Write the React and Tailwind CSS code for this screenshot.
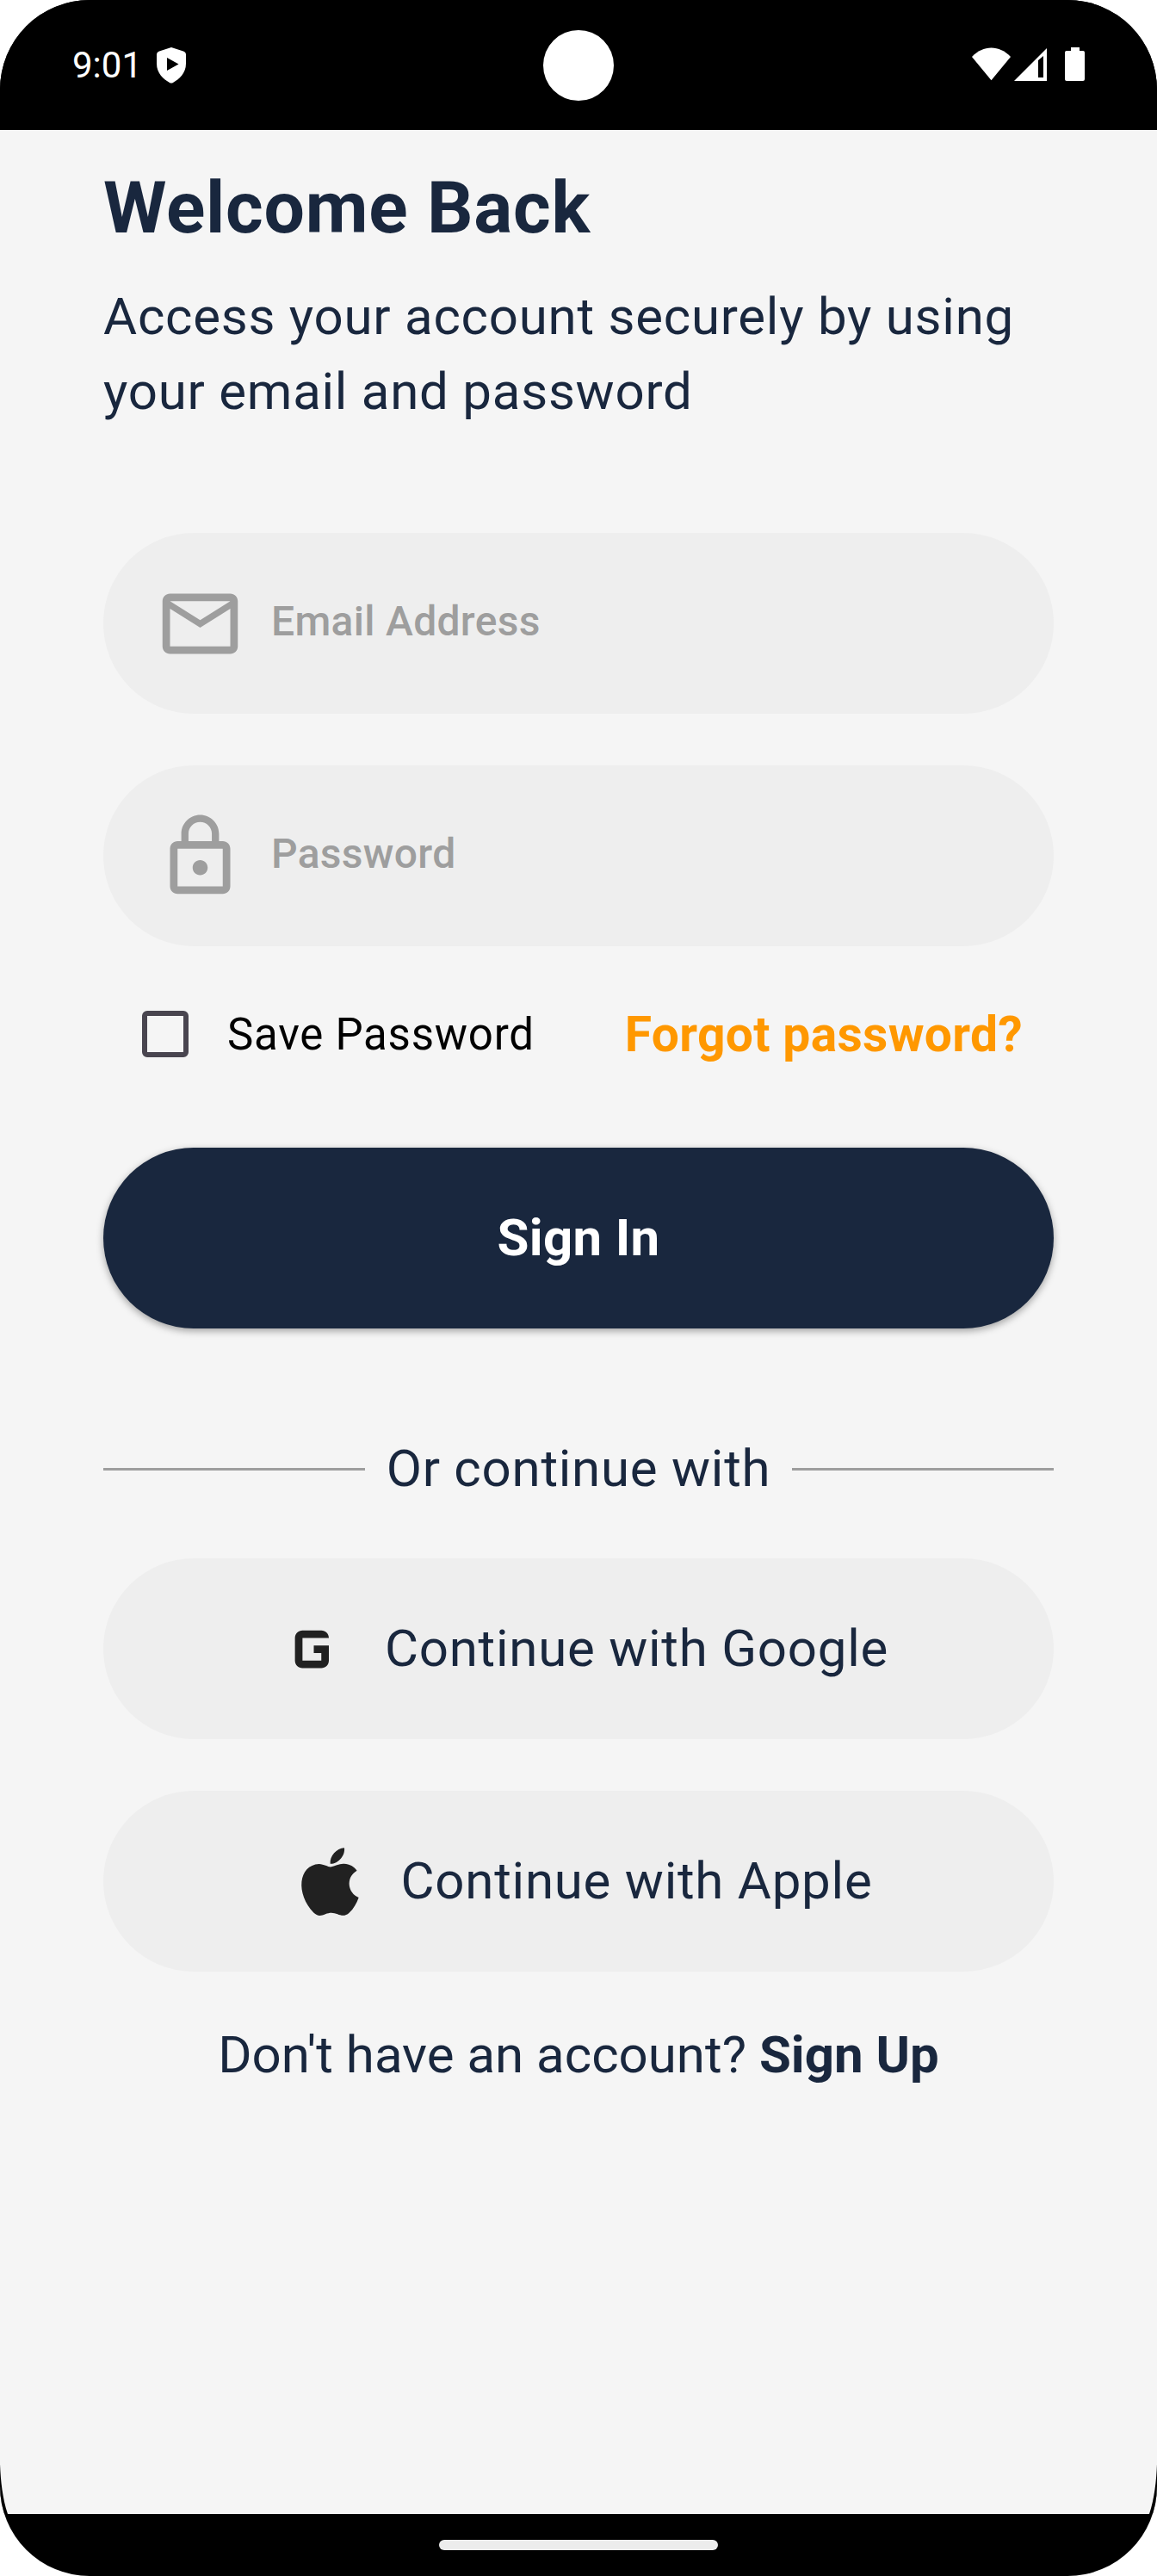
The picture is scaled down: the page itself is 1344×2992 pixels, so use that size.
function StatusIcons() {
  return (
    <svg className="block h-12 w-[136px]" viewBox="1124 52 136 48" fill="#fff">
      <path d="M1129 66C1142 52 1161 52 1174 66L1151.500 93.200Z" />
      <path fillRule="evenodd" d="M1178 94L1216 56V94ZM1206 70V90H1212V65Z" />
      <path d="M1244 55h10v4h4a2 2 0 0 1 2 2v31a2 2 0 0 1-2 2h-19a2 2 0 0 1-2-2V61a2 2 0 0 1 2-2h5Z" />
    </svg>
  );
}

function StatusBar() {
  return (
    <header className="relative flex h-[151px] items-start justify-between bg-black pr-[84px] pl-[84px] text-white">
      <div className="flex items-start">
        <span className="mt-[51px] w-[98px] text-[42px] leading-[49px]">9:01</span>
        <svg className="mt-[54px] h-[43px] w-[34px]" viewBox="0 0 34 43">
          <path fill="#fff" fillRule="evenodd" d="M17 1L31 5.500Q34 6.500 34 9.500V20C34 31 26 38 19 42Q17 43 15 42C8 38 0 31 0 20V9.500Q0 6.500 3 5.500ZM12 13V28L25.500 20.500Z" />
        </svg>
      </div>
      <div className="mt-[52px]"><StatusIcons /></div>
      <div className="absolute top-[35px] left-[631px] size-[82px] rounded-full bg-white" />
    </header>
  );
}

function Field({ label, children }) {
  return (
    <div className="flex h-[210px] items-center gap-[30px] rounded-full bg-[#eeeeee] pl-[60px] text-[#9e9e9e]">
      <svg className="size-[105px]" viewBox="0 0 24 24" fill="currentColor">{children}</svg>
      <span className="pb-[4px] text-[48px] leading-[56px] font-medium tracking-[0.3px]">{label}</span>
    </div>
  );
}

function SocialButton({ label, path }) {
  return (
    <button className="flex h-[210px] w-full items-center justify-center gap-[30px] rounded-full bg-[#eeeeee]">
      <svg className="size-[105px]" viewBox="0 0 24 24" fill="#212121"><path d={path} /></svg>
      <span className="text-[60px] leading-[86px] tracking-[0.75px]">{label}</span>
    </button>
  );
}

const googlePath = "M16 9c0-1.100-.9-2-2-2H9c-1.100 0-2 .9-2 2v6c0 1.100.9 2 2 2h5c1.100 0 2-.9 2-2v-4h-4v2h2v2H9V9h7z";
const applePath = "M17.050 20.280c-.98.950-2.050.8-3.080.350-1.090-.460-2.090-.480-3.240 0-1.440.620-2.200.440-3.060-.350C2.790 15.250 3.510 7.590 9.050 7.310c1.350.070 2.290.740 3.080.8 1.180-.240 2.310-.930 3.570-.840 1.510.120 2.650.720 3.400 1.800-3.120 1.870-2.380 5.980.480 7.130-.570 1.500-1.310 2.990-2.540 4.090l.010-.010zM12.030 7.250c-.150-2.230 1.660-4.070 3.740-4.250.290 2.580-2.340 4.500-3.740 4.250z";

export default function App() {
  return (
    <div className="h-[2992px] w-[1344px] bg-white font-['Roboto',sans-serif] text-[#19273e]">
      <div className="flex h-full flex-col overflow-hidden rounded-[104px] bg-black">
        <StatusBar />
        <main className="relative h-[2769px] bg-[#f5f5f5] px-[120px]">
          <h1 className="pt-[31px] text-[84px] leading-[120px] font-bold tracking-[0.75px]">Welcome Back</h1>
          <p className="mt-[22px] text-[60px] leading-[87px] tracking-[0.75px] whitespace-nowrap">
            Access your account securely by using<br />your email and password
          </p>
          <div className="mt-[121px] flex flex-col gap-[60px]">
            <Field label="Email Address">
              <path d="M22 6c0-1.100-.9-2-2-2H4c-1.100 0-2 .9-2 2v12c0 1.100.9 2 2 2h16c1.100 0 2-.9 2-2V6zm-2 0l-8 5-8-5h16zm0 12H4V8l8 5 8-5v10z" />
            </Field>
            <Field label="Password">
              <path d="M12 17c1.100 0 2-.9 2-2s-.9-2-2-2-2 .9-2 2 .9 2 2 2zm6-9h-1V6c0-2.760-2.240-5-5-5S7 3.240 7 6v2H6c-1.100 0-2 .9-2 2v10c0 1.100.9 2 2 2h12c1.100 0 2-.9 2-2V10c0-1.100-.9-2-2-2zM8.900 6c0-1.710 1.390-3.100 3.100-3.100s3.100 1.390 3.100 3.100v2H8.900V6zM18 20H6V10h12v10z" />
            </Field>
          </div>
          <div className="flex h-[234px] items-center justify-between pr-[36px] pb-[30px] pl-[45px]">
            <label className="flex items-center gap-[45px]">
              <span className="size-[54px] rounded-[6px] border-[6px] border-[#49454f]" />
              <span className="pt-[2px] text-[51px] leading-[74px] tracking-[0.75px] text-black">Save Password</span>
            </label>
            <a className="pt-[2px] text-[57px] leading-[82px] font-bold tracking-[0.3px] text-[#ff9800]">Forgot password?</a>
          </div>
          <button className="block h-[210px] w-full rounded-full bg-[#19273e] text-[60px] font-bold tracking-[0.3px] text-white shadow-[0_3px_9px_rgba(0,0,0,0.35)]">Sign In</button>
          <div className="mt-[120px] flex h-[87px] items-center gap-[25px]">
            <div className="h-[3px] flex-1 bg-[#9e9e9e]" />
            <span className="pb-[2px] text-[60px] leading-[85px] tracking-[0.75px]">Or continue with</span>
            <div className="h-[3px] flex-1 bg-[#9e9e9e]" />
          </div>
          <div className="mt-[60px] flex flex-col gap-[60px]">
            <SocialButton label="Continue with Google" path={googlePath} />
            <SocialButton label="Continue with Apple" path={applePath} />
          </div>
          <p className="mt-[54px] text-center text-[60px] leading-[86px]">Don't have an account? <b>Sign Up</b></p>
          {/* Display bezel curving in at the lower corners */}
          <svg className="absolute bottom-0 left-0 h-[58px] w-[10px]" viewBox="0 0 10 58"><path d="M0 0C.8 20 3 40 9 58H0Z" /></svg>
          <svg className="absolute right-0 bottom-0 h-[58px] w-[10px] -scale-x-100" viewBox="0 0 10 58"><path d="M0 0C.8 20 3 40 9 58H0Z" /></svg>
        </main>
        <footer className="flex flex-1 justify-center pt-[30px]">
          <div className="h-3 w-[324px] rounded-full bg-[#ececec]" />
        </footer>
      </div>
    </div>
  );
}
